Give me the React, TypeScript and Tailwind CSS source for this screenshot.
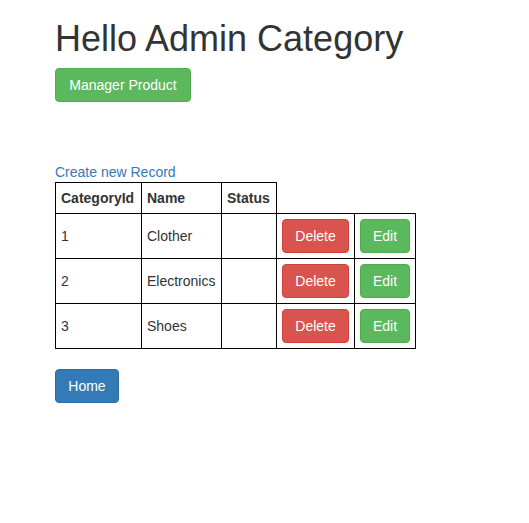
import React from 'react';

interface Category {
  id: number;
  name: string;
  status: string;
}

const categories: Category[] = [
  { id: 1, name: 'Clother', status: '' },
  { id: 2, name: 'Electronics', status: '' },
  { id: 3, name: 'Shoes', status: '' },
];

const btn =
  'inline-block rounded-[4px] border py-[6px] text-center text-[14px] leading-[20px] text-white';

const App: React.FC = () => {
  return (
    <div className="min-h-screen bg-white pl-[55px] text-[14px] leading-[20px] text-[#333] font-['Liberation_Sans',Arial,sans-serif]">
      <h1 className="pt-[20px] text-[36px] leading-[38px] font-normal text-[#333]">
        Hello Admin Category
      </h1>
      <div className="mt-[10px]">
        <button className={`${btn} w-[136px] bg-[#5cb85c] border-[#4cae4c]`}>Manager Product</button>
      </div>

      <div className="mt-[60px]">
        <a href="#" className="text-[#337ab7]">
          Create new Record
        </a>
      </div>

      <table className="border-collapse">
        <thead>
          <tr>
            <th className="border border-black p-[5px] text-left font-bold">
              <div className="min-w-[75px]">CategoryId</div>
            </th>
            <th className="border border-black p-[5px] text-left font-bold">
              <div className="min-w-[69px]">Name</div>
            </th>
            <th className="border border-black p-[5px] text-left font-bold">
              <div className="min-w-[44px]">Status</div>
            </th>
          </tr>
        </thead>
        <tbody>
          {categories.map((c) => (
            <tr key={c.id}>
              <td className="border border-black p-[5px]">{c.id}</td>
              <td className="border border-black p-[5px]">{c.name}</td>
              <td className="border border-black p-[5px]">{c.status}</td>
              <td className="border border-black p-[5px]">
                <button className={`${btn} w-[67px] bg-[#d9534f] border-[#d43f3a]`}>Delete</button>
              </td>
              <td className="border border-black p-[5px]">
                <button className={`${btn} w-[50px] bg-[#5cb85c] border-[#4cae4c]`}>Edit</button>
              </td>
            </tr>
          ))}
        </tbody>
      </table>

      <div className="mt-[20px]">
        <button className={`${btn} w-[64px] bg-[#337ab7] border-[#2e6da4]`}>Home</button>
      </div>
    </div>
  );
};

export default App;
